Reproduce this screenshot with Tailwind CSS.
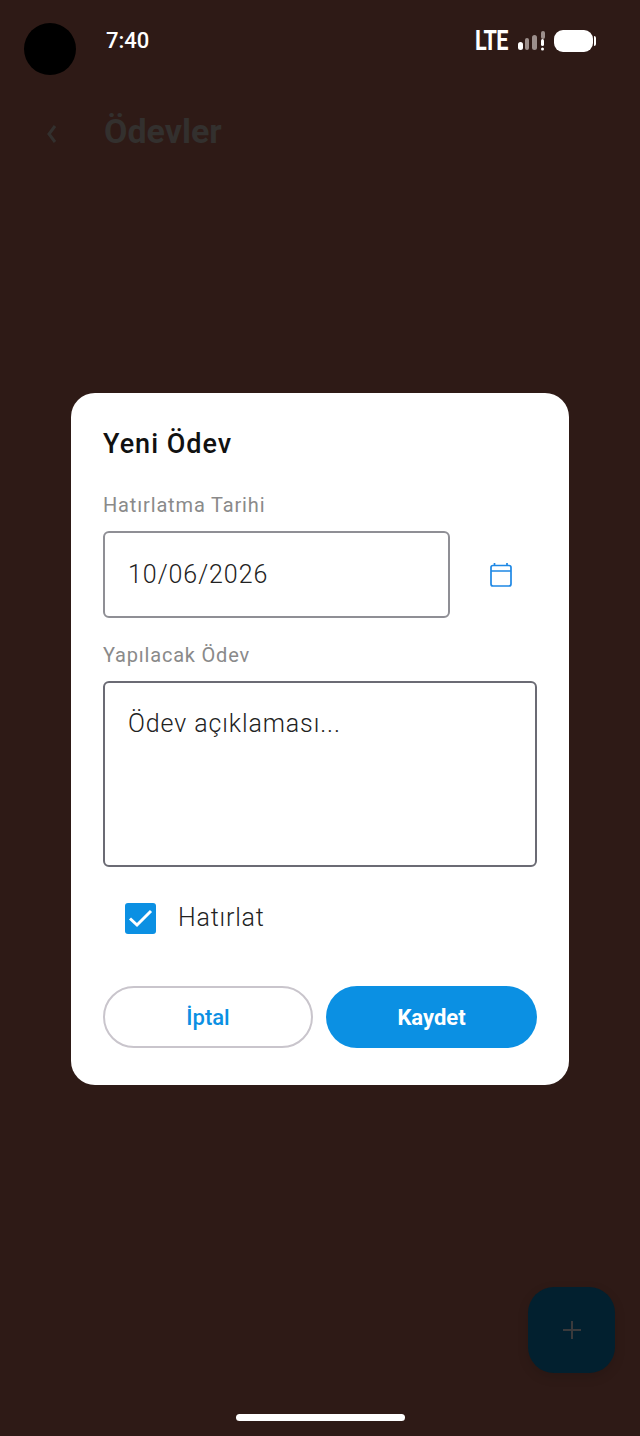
<!DOCTYPE html>
<html lang="tr">
<head>
    <meta charset="UTF-8">
    <meta name="viewport" content="width=device-width, initial-scale=1.0">
    <title>Ödevler</title>
    <script src="https://cdn.jsdelivr.net/npm/@tailwindcss/browser@4"></script>
</head>
<body class="bg-[#2e1a16]">
    <div class="relative w-[640px] h-[1436px] overflow-hidden bg-[#2e1a16] font-['Roboto',sans-serif]">
        <!-- status bar -->
        <div class="flex items-center h-[98px] pl-[24px] pr-[44px]">
            <div class="w-[52px] h-[52px] rounded-full bg-black"></div>
            <span class="ml-[30px] mb-[16px] text-[22px] leading-[28px] font-medium text-white">7:40</span>
            <div class="ml-auto mb-[16px] flex items-center">
                <span class="text-[27px] leading-[28px] font-bold text-white tracking-[-1px] scale-x-[0.8] origin-right">LTE</span>
                <svg class="ml-[9px]" width="28" height="22" viewBox="0 0 28 22">
                    <rect x="1" y="12" width="5" height="8" rx="2.5" fill="#ffffff"/>
                    <rect x="8" y="8" width="4" height="12" rx="2" fill="#9c8f8c"/>
                    <rect x="15" y="5" width="5" height="15" rx="2.5" fill="#9c8f8c"/>
                    <rect x="24" y="1" width="4" height="8" rx="2" fill="#9c8f8c"/>
                    <rect x="24" y="9" width="3" height="7" rx="1.5" fill="#ffffff"/>
                    <rect x="24" y="17.5" width="3" height="3" rx="1.5" fill="#ffffff"/>
                </svg>
                <div class="ml-[9px] w-[39px] h-[22px] rounded-[9px] bg-white"></div>
                <div class="ml-[1px] w-[2px] h-[10px] rounded-r-[2px] bg-white"></div>
            </div>
        </div>

        <!-- app bar, dimmed by the scrim -->
        <div class="flex items-center h-[66px] pl-[46px]">
            <svg class="mt-[6px]" width="12" height="20" viewBox="0 0 12 20" fill="none" stroke="#33302e" stroke-width="3">
                <path d="M9 2 L3 10 L9 18"/>
            </svg>
            <h1 class="ml-[46px] text-[34px] leading-[40px] font-bold text-[#33302e]">Ödevler</h1>
        </div>

        <!-- dialog -->
        <div class="absolute left-[71px] top-[393px] w-[498px] h-[692px] rounded-[24px] bg-white px-[32px] pt-[33px]">
            <h2 class="text-[27px] leading-[36px] font-medium text-[#111111] tracking-[1px]">Yeni Ödev</h2>
            <p class="mt-[30px] text-[20px] leading-[26px] text-[#8a8a8a] tracking-[0.85px]">Hatırlatma Tarihi</p>
            <div class="mt-[13px] flex items-center">
                <div class="flex items-center w-[347px] h-[87px] rounded-[6px] border-2 border-[#8f8f95] pl-[23px] text-[25px] font-[350] text-[#222222] tracking-[0.95px]">10/06/2026</div>
                <svg class="ml-[40px]" width="22" height="24" viewBox="0 0 22 24" fill="none" stroke="#1e88e5" stroke-width="1.7">
                    <rect x="1" y="2.5" width="20" height="20.5" rx="2"/>
                    <path d="M1 8 H21 M4.5 0 V3 M17 0 V3"/>
                </svg>
            </div>
            <p class="mt-[24px] text-[20px] leading-[26px] text-[#8a8a8a] tracking-[0.8px]">Yapılacak Ödev</p>
            <div class="mt-[13px] w-[434px] h-[186px] rounded-[6px] border-2 border-[#6b6b74] pl-[23px] pt-[23px] text-[25px] leading-[36px] font-[350] text-[#222222] tracking-[0.9px]">Ödev açıklaması...</div>
            <div class="mt-[35px] flex items-center pl-[22px]">
                <div class="flex items-center justify-center w-[31px] h-[31px] rounded-[3px] bg-[#0b90e3]">
                    <svg width="25" height="25" viewBox="0 0 25 25" fill="none" stroke="#ffffff" stroke-width="3">
                        <path d="M2 12.5 L9 19 L23 5"/>
                    </svg>
                </div>
                <span class="ml-[22px] text-[25px] leading-[32px] font-[350] text-[#222222] tracking-[0.8px]">Hatırlat</span>
            </div>
            <div class="mt-[52px] flex gap-[13px]">
                <button class="w-[210px] h-[62px] rounded-full border-2 border-[#c9c5cc] bg-white text-[22px] font-medium text-[#0b90e3]">İptal</button>
                <button class="w-[211px] h-[62px] rounded-full bg-[#0b90e3] text-[22px] font-bold text-white">Kaydet</button>
            </div>
        </div>

        <!-- fab, dimmed by the scrim -->
        <div class="absolute left-[528px] top-[1287px] w-[87px] h-[86px] flex items-center justify-center rounded-[26px] bg-[#02202f] shadow-[0_4px_12px_rgba(0,0,0,0.12)]">
            <svg width="18" height="18" viewBox="0 0 18 18" stroke="#3a3a3c" stroke-width="2">
                <path d="M0 9 H18 M9 0 V18"/>
            </svg>
        </div>

        <!-- gesture bar -->
        <div class="absolute left-[236px] top-[1414px] w-[169px] h-[7px] rounded-full bg-white"></div>
    </div>
</body>
</html>
